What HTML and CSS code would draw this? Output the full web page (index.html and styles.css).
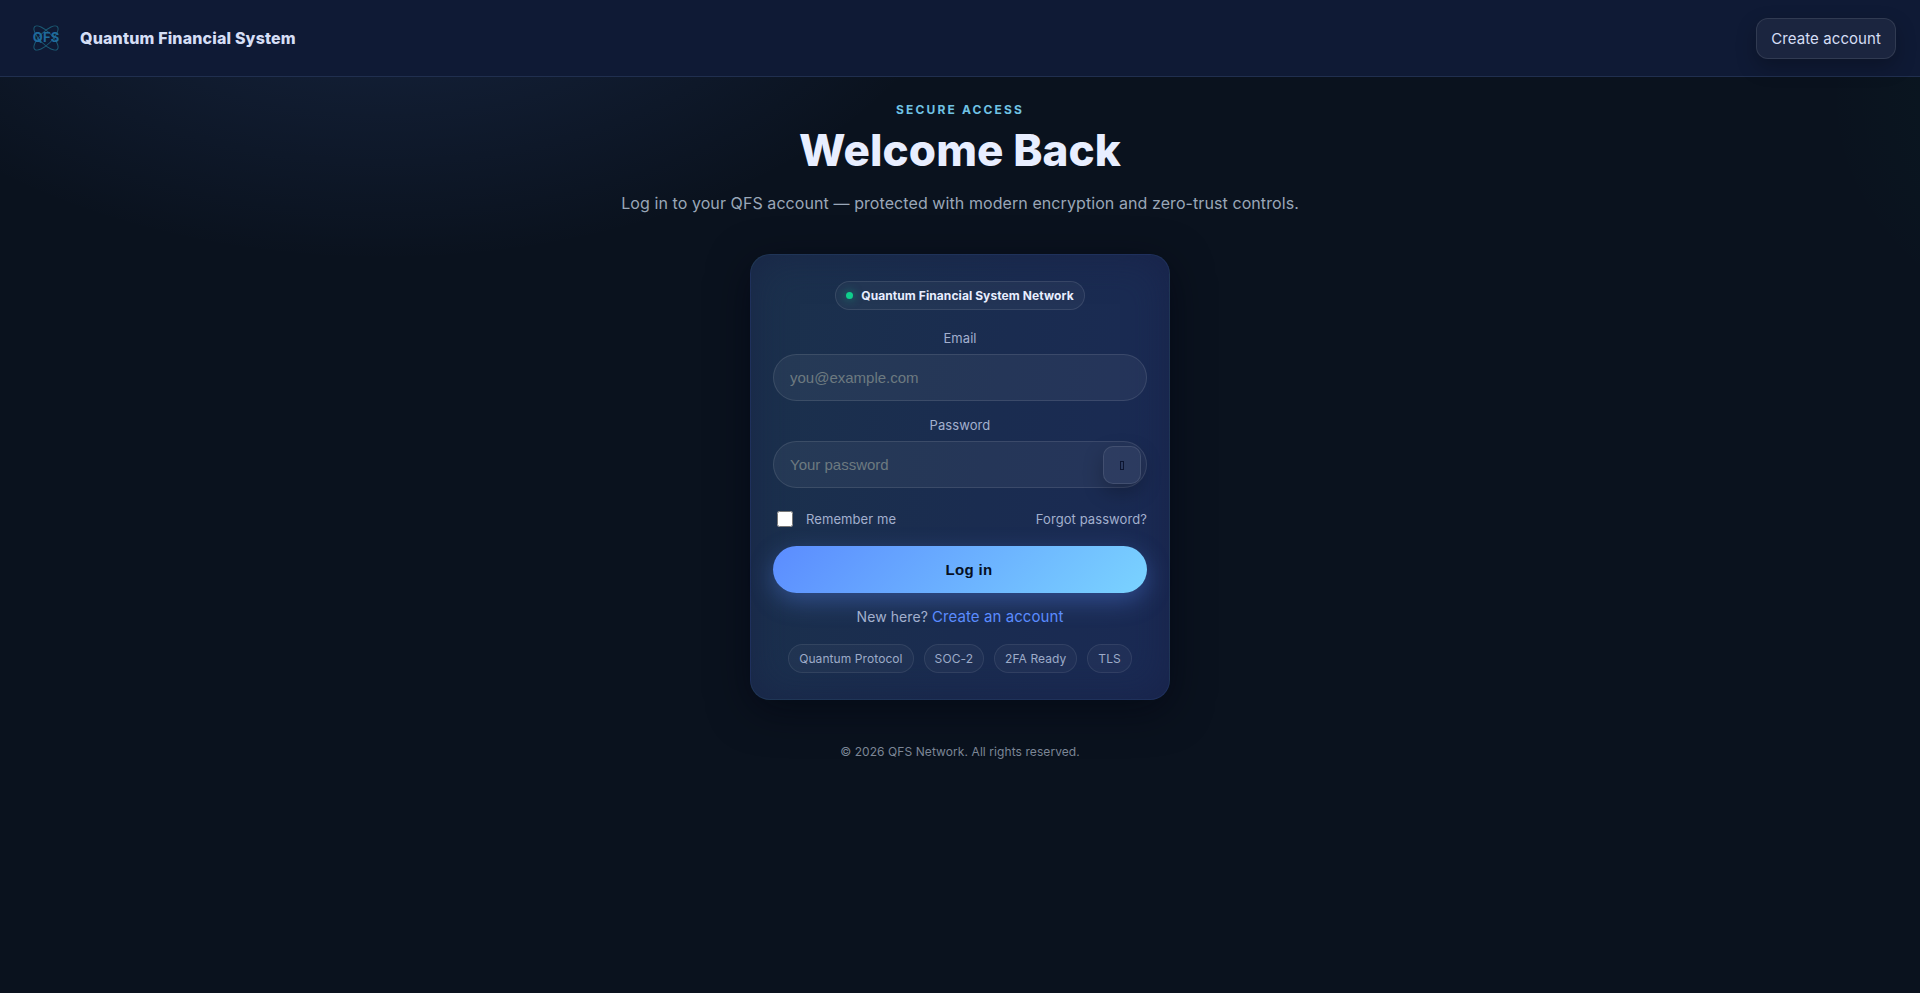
FILE: index.html
```
<!doctype html>
<html lang="en">
<head>
<meta charset="utf-8">
<meta name="viewport" content="width=device-width, initial-scale=1">
<title>Log in | Quantum Financial System</title>
<link rel="stylesheet" href="styles.css">
</head>
<body>
<header class="topbar">
  <a class="brand" href="#">
    <svg class="logo" viewBox="0 0 44 44" aria-hidden="true">
      <g fill="none" stroke="#1b5a74" stroke-width="1">
        <ellipse cx="22" cy="22" rx="16" ry="6" transform="rotate(45 22 22)"/>
        <ellipse cx="22" cy="22" rx="16" ry="6" transform="rotate(-45 22 22)"/>
      </g>
      <text x="22" y="26" text-anchor="middle">QFS</text>
    </svg>
    <span>Quantum Financial System</span>
  </a>
  <a class="btn-ghost" href="#">Create account</a>
</header>

<main>
  <section class="hero">
    <div class="eyebrow">Secure Access</div>
    <h1>Welcome Back</h1>
    <p>Log in to your QFS account — protected with modern encryption and zero-trust controls.</p>
  </section>

  <form class="card">
    <div class="badge"><span class="dot"></span>Quantum Financial System Network</div>

    <label class="label" for="email">Email</label>
    <div class="field">
      <input class="input" type="email" id="email" placeholder="you@example.com">
    </div>

    <label class="label" for="password">Password</label>
    <div class="field">
      <input class="input" type="password" id="password" placeholder="Your password">
      <button class="toggle" type="button" aria-label="Show password"><span class="glyph"></span></button>
    </div>

    <div class="row">
      <label class="remember"><input type="checkbox" id="remember">Remember me</label>
      <a href="#">Forgot password?</a>
    </div>

    <button class="btn-primary" type="submit"><span class="btn-icon"></span>Log in</button>

    <p class="signup">New here? <a href="#">Create an account</a></p>

    <div class="chips">
      <span class="chip">Quantum Protocol</span>
      <span class="chip">SOC-2</span>
      <span class="chip">2FA Ready</span>
      <span class="chip">TLS</span>
    </div>
  </form>
</main>

<footer>© 2026 QFS Network. All rights reserved.</footer>
</body>
</html>
```
FILE: styles.css
```
:root {
	--bg: #0a121e;
	--text: #e8eeff;
	--muted: #9aa7b8;
	--line: rgba(255, 255, 255, 0.1);
	--blue: #5b8cff;
	--cyan: #7ad3ff;
}
* {box-sizing: border-box;}
body {
	margin: 0;
	min-height: 100vh;
	color: var(--text);
	font-family: Inter, "Liberation Sans", sans-serif;
	font-size: 16px;
	letter-spacing: 0.005em;
	background:
		radial-gradient(1000px 600px at 20% -10%, rgba(91, 140, 255, 0.18), transparent 60%),
		radial-gradient(800px 500px at 120% 10%, rgba(0, 212, 140, 0.08), transparent 60%),
		var(--bg);
}
a {
	color: inherit;
	text-decoration: none;
}

/* header */
.topbar {
	display: flex;
	align-items: center;
	justify-content: space-between;
	height: 77px;
	padding: 0 24px;
	border-bottom: 1px solid rgba(122, 160, 220, 0.16);
	background: #0f1a35;
}
.brand {
	display: flex;
	align-items: center;
	gap: 12px;
	color: #d5def5;
	font-weight: 800;
	letter-spacing: 0.01em;
}
.logo {
	width: 44px;
	height: 44px;
}
.logo text {
	fill: #1f6a9c;
	font-size: 13px;
	font-weight: 700;
}
.btn-ghost {
	padding: 0 14px;
	border: 1px solid var(--line);
	border-radius: 12px;
	background: rgba(255, 255, 255, 0.05);
	box-shadow: 0 8px 20px rgba(0, 0, 0, 0.25);
	color: #d5def5;
	font-size: 15px;
	line-height: 39px;
}

/* heading */
.hero {
	padding: 24px 24px 0;
	text-align: center;
}
.eyebrow {
	color: #70c2e4;
	font-size: 12px;
	font-weight: 700;
	line-height: 18px;
	letter-spacing: 0.18em;
	text-transform: uppercase;
}
h1 {
	margin: 5px 0 14px;
	font-size: 44px;
	font-weight: 800;
	line-height: 52px;
}
.hero p {
	margin: 0;
	color: var(--muted);
	line-height: 26px;
}

/* login card */
.card {
	width: 100%;
	max-width: 420px;
	margin: 38px auto 0;
	padding: 26px 22px;
	border: 1px solid rgba(122, 150, 230, 0.06);
	border-radius: 20px;
	background: linear-gradient(100deg, #1b314c, #1a2c50 55%, #1a2a54);
	box-shadow:
		0 10px 40px rgba(0, 4, 16, 0.5),
		inset 0 0 40px rgba(24, 30, 66, 0.6);
	text-align: center;
}
.badge {
	display: inline-flex;
	align-items: center;
	gap: 8px;
	height: 29px;
	padding: 0 10px;
	border: 1px solid var(--line);
	border-radius: 999px;
	background: rgba(255, 255, 255, 0.04);
	font-size: 12px;
	font-weight: 700;
}
.dot {
	width: 7px;
	height: 7px;
	border-radius: 50%;
	background: #0fce8c;
	box-shadow: 0 0 10px rgba(15, 206, 140, 0.6);
}
.label {
	display: block;
	margin: 15px 0 7px;
	color: #a3b0ce;
	font-size: 13px;
	line-height: 18px;
}
.badge + .label {margin-top: 19px;}
.field {position: relative;}
.input {
	display: block;
	width: 100%;
	height: 47px;
	padding: 0 16px;
	border: 1px solid var(--line);
	border-radius: 24px;
	outline: 0;
	background: rgba(255, 255, 255, 0.05);
	color: var(--text);
	font-family: "Liberation Sans", Arial, sans-serif;
	font-size: 15px;
}
.input::placeholder {color: #6d7a80;}
.toggle {
	position: absolute;
	top: 5px;
	right: 6px;
	display: flex;
	align-items: center;
	justify-content: center;
	width: 38px;
	height: 38px;
	padding: 0;
	border: 1px solid var(--line);
	border-radius: 10px;
	background: rgba(255, 255, 255, 0.04);
	box-shadow: 0 8px 20px rgba(0, 0, 0, 0.25);
}
.glyph {
	width: 4px;
	height: 9px;
	border: 1px solid #0b1430;
}
.row {
	display: flex;
	align-items: center;
	justify-content: space-between;
	margin: 20px 0 16px;
	color: #a3b0ce;
	font-size: 13px;
	line-height: 22px;
}
.remember {
	display: flex;
	align-items: center;
	gap: 13px;
}
.remember input {
	width: 16px;
	height: 16px;
	margin: 0 0 0 4px;
}
.btn-primary {
	display: flex;
	align-items: center;
	justify-content: center;
	gap: 10px;
	width: 100%;
	height: 47px;
	border: 0;
	border-radius: 24px;
	background: linear-gradient(135deg, var(--blue), var(--cyan));
	box-shadow: 0 8px 24px rgba(91, 140, 255, 0.35);
	color: #061024;
	font-family: "Liberation Sans", Arial, sans-serif;
	font-size: 15px;
	font-weight: 700;
	letter-spacing: 0.02em;
}
.btn-icon {width: 8px;}
.signup {
	margin: 11px 0 15px;
	color: #a3b0ce;
	font-size: 14px;
	line-height: 25px;
}
.signup a {
	color: var(--blue);
	font-size: 15px;
}
.chips {
	display: flex;
	flex-wrap: wrap;
	justify-content: center;
	gap: 10px;
}
.chip {
	padding: 0 10px;
	border: 1px solid rgba(255, 255, 255, 0.08);
	border-radius: 999px;
	background: rgba(255, 255, 255, 0.03);
	color: #9dabc8;
	font-size: 12px;
	line-height: 27px;
}

footer {
	padding: 42px 24px 24px;
	color: #7c8696;
	font-size: 12px;
	line-height: 20px;
	text-align: center;
}
```
